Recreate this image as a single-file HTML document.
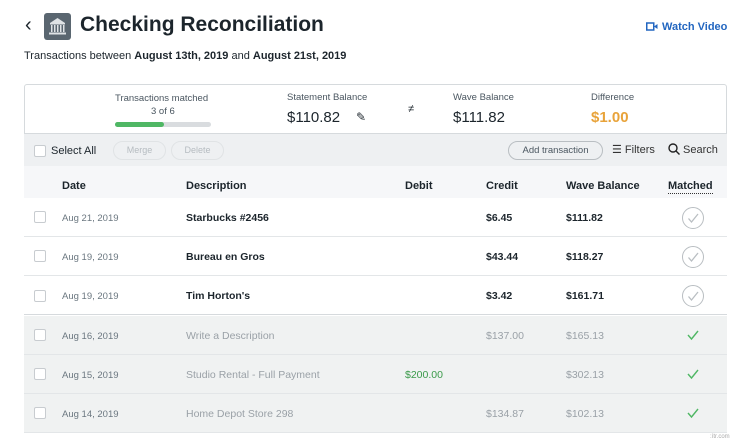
<!DOCTYPE html>
<html><head><meta charset="utf-8"><style>
*{box-sizing:border-box;margin:0;padding:0}
body{width:750px;height:446px;background:#fff;font-family:"Liberation Sans",sans-serif;color:#1c252c;position:relative;overflow:hidden}
.a{position:absolute;white-space:nowrap}
.cb{position:absolute;width:12px;height:12px;border:1px solid #c8ccd0;border-radius:2px;background:#fff}
.row{position:absolute;left:24px;width:703px;height:39px;border-bottom:1px solid #e3e6e8}
.th{font-size:11px;font-weight:bold;top:180px}
.d{font-size:9.5px;color:#6b7780}
.b{font-size:10.5px;font-weight:bold}
.g{font-size:10.5px;color:#9aa1a7}
.circ{position:absolute;left:682px;width:22px;height:22px;border:1.5px solid #b9bec2;border-radius:50%}
</style></head><body>
<div class="a" style="left:25px;top:14px;font-size:20px">‹</div>
<div class="a" style="left:44px;top:13px;width:27px;height:27px;background:#5a6670;border-radius:3px">
<svg width="27" height="27" viewBox="0 0 27 27"><path d="M6 10 L13.5 5 L21 10 Z" fill="#dfe3e6"/><rect x="6" y="10" width="15" height="1.5" fill="#dfe3e6"/><g fill="#dfe3e6"><rect x="7" y="12" width="1.5" height="7"/><rect x="10" y="12" width="1.5" height="7"/><rect x="13" y="12" width="1.5" height="7"/><rect x="16" y="12" width="1.5" height="7"/><rect x="19" y="12" width="1.5" height="7"/></g><rect x="5" y="19.5" width="17" height="2" fill="#dfe3e6"/></svg></div>
<div class="a" style="left:80px;top:13px;font-size:21px;font-weight:bold">Checking Reconciliation</div>
<div class="a" style="left:646px;top:21px;font-size:11px;font-weight:bold;color:#2266c0"><svg width="12" height="9" style="vertical-align:-1px;margin-right:4px"><rect x="0.75" y="1" width="7" height="7" fill="none" stroke="#2266c0" stroke-width="1.5"/><path d="M8 4.5 L11.5 2 V7 Z" fill="#2266c0"/></svg>Watch Video</div>
<div class="a" style="left:24px;top:50px;font-size:11px">Transactions between <b>August 13th, 2019</b> and <b>August 21st, 2019</b></div>
<div class="a" style="left:24px;top:84px;width:703px;height:50px;border:1px solid #d6dadd;border-radius:3px 3px 0 0"></div>
<div class="a" style="left:115px;top:93px;font-size:9.5px;color:#4a5660">Transactions matched</div>
<div class="a" style="left:151px;top:106px;font-size:9.5px;color:#4a5660">3 of 6</div>
<div class="a" style="left:115px;top:122px;width:96px;height:5px;background:#d9dcdf;border-radius:3px"><div style="width:49px;height:5px;background:#4fb764;border-radius:3px"></div></div>
<div class="a" style="left:287px;top:92px;font-size:9.5px;color:#4a5660">Statement Balance</div>
<div class="a" style="left:287px;top:109px;font-size:15px">$110.82</div>
<div class="a" style="left:356px;top:110px;font-size:12px">✎</div>
<div class="a" style="left:408px;top:103px;font-size:11px">≠</div>
<div class="a" style="left:453px;top:92px;font-size:9.5px;color:#4a5660">Wave Balance</div>
<div class="a" style="left:453px;top:109px;font-size:15px">$111.82</div>
<div class="a" style="left:591px;top:92px;font-size:9.5px;color:#4a5660">Difference</div>
<div class="a" style="left:591px;top:109px;font-size:15px;color:#e8a33a;font-weight:bold">$1.00</div>
<div class="a" style="left:24px;top:134px;width:703px;height:32px;background:#eef0f2"></div>
<div class="cb" style="left:34px;top:145px;width:12px;height:12px"></div>
<div class="a" style="left:51px;top:145px;font-size:11px">Select All</div>
<div class="a" style="left:113px;top:141px;width:53px;height:19px;border:1px solid #e0e3e5;border-radius:10px;font-size:9px;color:#b6bcc1;text-align:center;line-height:17px">Merge</div>
<div class="a" style="left:171px;top:141px;width:53px;height:19px;border:1px solid #e0e3e5;border-radius:10px;font-size:9px;color:#b6bcc1;text-align:center;line-height:17px">Delete</div>
<div class="a" style="left:508px;top:141px;width:95px;height:19px;border:1px solid #b9bec2;border-radius:10px;font-size:9.5px;color:#4a5660;text-align:center;line-height:17px">Add transaction</div>
<div class="a" style="left:612px;top:143px;font-size:11px;color:#333">☰ Filters</div>
<div class="a" style="left:668px;top:143px;font-size:11px;color:#333"><svg width="12" height="12" style="vertical-align:-2px"><circle cx="5" cy="5" r="4" fill="none" stroke="#222" stroke-width="1.4"/><path d="M8 8 L11.5 11.5" stroke="#222" stroke-width="1.4"/></svg> Search</div>
<div class="a" style="left:24px;top:166px;width:703px;height:32px;background:#f6f7f9"></div>
<div class="a th" style="left:62px">Date</div>
<div class="a th" style="left:186px">Description</div>
<div class="a th" style="left:405px">Debit</div>
<div class="a th" style="left:486px">Credit</div>
<div class="a th" style="left:566px">Wave Balance</div>
<div class="a th" style="left:668px;border-bottom:1px dotted #333;line-height:13px">Matched</div>

<div class="row" style="top:198px"></div>
<div class="row" style="top:237px"></div>
<div class="row" style="top:276px;border-bottom:1px solid #d6dadd"></div>
<div class="row" style="top:316px;background:#f0f2f2"></div>
<div class="row" style="top:355px;background:#f0f2f2"></div>
<div class="row" style="top:394px;background:#f0f2f2"></div>

<div class="cb" style="left:34px;top:211px"></div><div class="a d" style="left:62px;top:213px">Aug 21, 2019</div><div class="a b" style="left:186px;top:212px">Starbucks #2456</div><div class="a b" style="left:486px;top:212px">$6.45</div><div class="a b" style="left:566px;top:212px">$111.82</div>
<div class="circ" style="top:207px"></div>
<div class="cb" style="left:34px;top:250px"></div><div class="a d" style="left:62px;top:252px">Aug 19, 2019</div><div class="a b" style="left:186px;top:251px">Bureau en Gros</div><div class="a b" style="left:486px;top:251px">$43.44</div><div class="a b" style="left:566px;top:251px">$118.27</div>
<div class="circ" style="top:246px"></div>
<div class="cb" style="left:34px;top:290px"></div><div class="a d" style="left:62px;top:291px">Aug 19, 2019</div><div class="a b" style="left:186px;top:290px">Tim Horton's</div><div class="a b" style="left:486px;top:290px">$3.42</div><div class="a b" style="left:566px;top:290px">$161.71</div>
<div class="circ" style="top:285px"></div>
<svg class="a" style="left:682px;top:207px" width="22" height="100"><g fill="none" stroke="#b9bec2" stroke-width="1.3"><path d="M6.5 11.5 L9.5 15 L16 7"/><path d="M6.5 50.5 L9.5 54 L16 46"/><path d="M6.5 89.5 L9.5 93 L16 85"/></g></svg>

<div class="cb" style="left:34px;top:329px"></div><div class="a d" style="left:62px;top:331px">Aug 16, 2019</div><div class="a g" style="left:186px;top:330px">Write a Description</div><div class="a g" style="left:486px;top:330px">$137.00</div><div class="a g" style="left:566px;top:330px">$165.13</div>
<div class="cb" style="left:34px;top:368px"></div><div class="a d" style="left:62px;top:370px">Aug 15, 2019</div><div class="a g" style="left:186px;top:369px">Studio Rental - Full Payment</div><div class="a" style="left:405px;top:369px;font-size:10.5px;color:#3a9a4a">$200.00</div><div class="a g" style="left:566px;top:369px">$302.13</div>
<div class="cb" style="left:34px;top:407px"></div><div class="a d" style="left:62px;top:409px">Aug 14, 2019</div><div class="a g" style="left:186px;top:408px">Home Depot Store 298</div><div class="a g" style="left:486px;top:408px">$134.87</div><div class="a g" style="left:566px;top:408px">$102.13</div>
<svg class="a" style="left:682px;top:316px" width="22" height="117"><g fill="none" stroke="#4fb764" stroke-width="1.4"><path d="M6 19 L9.5 23 L16 15"/><path d="M6 58 L9.5 62 L16 54"/><path d="M6 97 L9.5 101 L16 93"/></g></svg>
<div class="a" style="left:710px;top:434px;font-size:6px;color:#aaa">:ítr.com</div>
</body></html>
